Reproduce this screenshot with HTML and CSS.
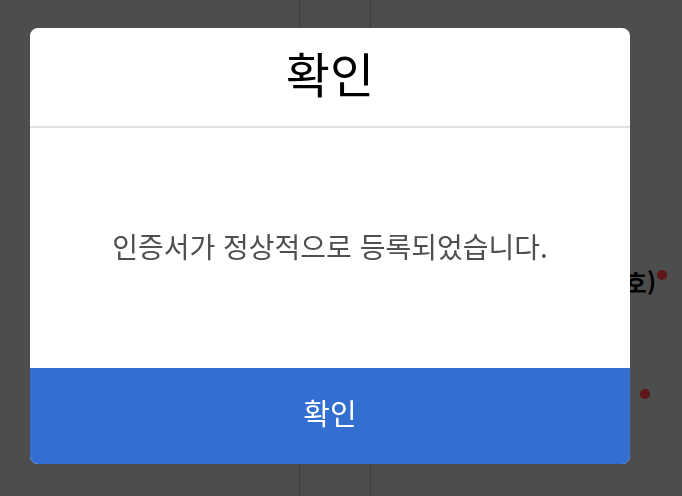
FILE: index.html
```html
<!DOCTYPE html>
<html lang="ko">
<head>
    <meta charset="UTF-8">
    <meta name="viewport" content="width=device-width, initial-scale=1.0">
    <title>확인</title>
    <link rel="stylesheet" href="styles.css">
</head>
<body>
    <div class="page">
        <div class="rule rule-left"></div>
        <div class="rule rule-right"></div>
        <span class="behind-text">(휴대폰 번호)</span>
        <span class="dot dot-top"></span>
        <span class="dot dot-bottom"></span>
    </div>

    <!-- 인증서 등록 완료 팝업 -->
    <div class="popup-container">
        <div class="popup">
            <div class="popup-header">
                <h1>확인</h1>
            </div>
            <div class="popup-body">
                <p>인증서가 정상적으로 등록되었습니다.</p>
            </div>
            <button type="button" class="btn">확인</button>
        </div>
    </div>
</body>
</html>
```

FILE: styles.css
```css
* {
    margin: 0;
    padding: 0;
    box-sizing: border-box;
    font-family: "Noto Sans CJK KR", "Noto Sans", sans-serif;
}
body {
    width: 682px;
    height: 496px;
    overflow: hidden;
    background: #4d4d4d;
}
.page {
    position: relative;
    width: 100%;
    height: 100%;
}
.rule {
    position: absolute;
    top: 0;
    bottom: 0;
    width: 1px;
    background: #3c3c3c;
}
.rule-left {
    left: 299px;
}
.rule-right {
    left: 370px;
}
.behind-text {
    position: absolute;
    right: 26px;
    top: 264px;
    font-size: 24px;
    font-weight: 700;
    color: #000;
    white-space: nowrap;
}
.dot {
    position: absolute;
    width: 10px;
    height: 10px;
    border-radius: 50%;
    background: #5e1616;
}
.dot-top {
    left: 657px;
    top: 270px;
}
.dot-bottom {
    left: 640px;
    top: 389px;
}

/* Popup */
.popup-container {
    position: fixed;
    top: 0;
    left: 0;
    right: 0;
    bottom: 0;
    display: flex;
    padding: 28px 0 0 30px;
}
.popup {
    width: 600px;
    height: 436px;
    background: #fff;
    border-radius: 8px;
    overflow: hidden;
    display: flex;
    flex-direction: column;
}
.popup-header {
    height: 100px;
    border-bottom: 2px solid #e0e0e0;
    display: flex;
    justify-content: center;
    align-items: center;
}
.popup-header h1 {
    font-size: 48px;
    font-weight: 400;
    color: #000;
    line-height: 1;
    margin-top: -10px;
}
.popup-body {
    flex: 1;
    display: flex;
    justify-content: center;
    align-items: center;
}
.popup-body p {
    font-size: 28px;
    font-weight: 400;
    color: #4f4f4f;
    line-height: 1;
    margin-top: -4px;
}
.btn {
    height: 96px;
    width: 100%;
    border: none;
    background: #336ed1;
    color: #fff;
    font-size: 29px;
    font-weight: 400;
    padding-bottom: 8px;
    cursor: pointer;
}
```
